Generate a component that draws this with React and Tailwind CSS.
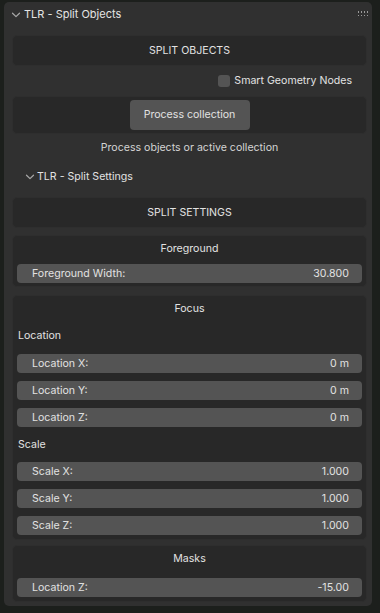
import React from 'react';

const font = { fontFamily: 'Inter, "Noto Sans", sans-serif' };

function Chevron({ className }) {
  return (
    <svg className={className} width="10" height="10" viewBox="0 0 10 10" fill="none">
      <path d="M1.5 3.2 L5 6.6 L8.5 3.2" stroke="#a8a8a8" strokeWidth="1.2" strokeLinecap="round" strokeLinejoin="round" />
    </svg>
  );
}

function Grip() {
  return (
    <div className="grid grid-cols-4 gap-x-[1.5px] gap-y-[2px]">
      {Array.from({ length: 8 }).map((_, i) => (
        <div key={i} className="w-[1.5px] h-[1.5px] bg-[#9a9a9a]" />
      ))}
    </div>
  );
}

function Field({ label, value }) {
  return (
    <div className="h-[19px] rounded-[4px] bg-[#545454] flex items-center justify-between pl-[15px] pr-[13px] text-[10.6px] text-[#e2e2e2]">
      <span>{label}</span>
      <span>{value}</span>
    </div>
  );
}

function Box({ title, children, className = '' }) {
  return (
    <div className={`rounded-[5px] bg-[#282828] border border-[#2e2e2e] px-[4px] ${className}`}>
      {title && (
        <div className="h-[26px] flex items-center justify-center text-[10.6px] text-[#e2e2e2]">{title}</div>
      )}
      {children}
    </div>
  );
}

export default function App() {
  return (
    <div className="w-[380px] h-[613px] bg-[#1c1f1c] pt-[2px] pl-[4px] pr-[8px] overflow-hidden" style={font}>
      <div className="w-[368px] h-[604px] rounded-[5px] bg-[#303030] flex flex-col">
        <div className="h-[25px] flex items-center pl-[7px] pr-[4px] text-[11px] text-[#e4e4e4]">
          <Chevron className="mr-[3px]" />
          <span>TLR - Split Objects</span>
          <div className="ml-auto mt-[-2px]">
            <Grip />
          </div>
        </div>

        <div className="pl-[8px] pr-[5px] flex flex-col">
          <Box className="mt-[8px] h-[31px] flex items-center justify-center">
            <span className="text-[10.6px] text-[#e2e2e2]">SPLIT OBJECTS</span>
          </Box>

          <div className="h-[30px] flex items-center justify-end pr-[15px] gap-[4px] text-[10.6px] text-[#e2e2e2]">
            <div className="w-[12px] h-[12px] rounded-[3px] bg-[#545454]" />
            <span>Smart Geometry Nodes</span>
          </div>

          <Box className="h-[38px] flex items-center justify-center">
            <div className="w-[120px] h-[30px] rounded-[4px] bg-[#545454] flex items-center justify-center text-[10.6px] text-[#e2e2e2]">
              Process collection
            </div>
          </Box>

          <div className="h-[28px] flex items-center justify-center text-[10.6px] text-[#d4d4d4]">
            Process objects or active collection
          </div>

          <div className="h-[30px] flex items-center pl-[13px] text-[10.6px] text-[#e2e2e2]">
            <Chevron className="mr-[2px]" />
            <span>TLR - Split Settings</span>
          </div>

          <Box className="mt-[5px] h-[31px] flex items-center justify-center">
            <span className="text-[10.6px] text-[#e2e2e2]">SPLIT SETTINGS</span>
          </Box>

          <Box title="Foreground" className="mt-[7px] pb-[3px]">
            <div className="pt-[2px]">
              <Field label="Foreground Width:" value="30.800" />
            </div>
          </Box>

          <Box title="Focus" className="mt-[8px] pb-[4px]">
            <div className="h-[28px] flex items-center pl-[1px] text-[10.6px] text-[#e2e2e2]">Location</div>
            <div className="flex flex-col gap-[8px] pt-[4px]">
              <Field label="Location X:" value="0 m" />
              <Field label="Location Y:" value="0 m" />
              <Field label="Location Z:" value="0 m" />
            </div>
            <div className="h-[35px] flex items-center pl-[1px] text-[10.6px] text-[#e2e2e2]">Scale</div>
            <div className="flex flex-col gap-[8px]">
              <Field label="Scale X:" value="1.000" />
              <Field label="Scale Y:" value="1.000" />
              <Field label="Scale Z:" value="1.000" />
            </div>
          </Box>

          <Box title="Masks" className="mt-[5px] pb-[4px]">
            <div className="pt-[6px]">
              <Field label="Location Z:" value="-15.00" />
            </div>
          </Box>
        </div>
      </div>
    </div>
  );
}
